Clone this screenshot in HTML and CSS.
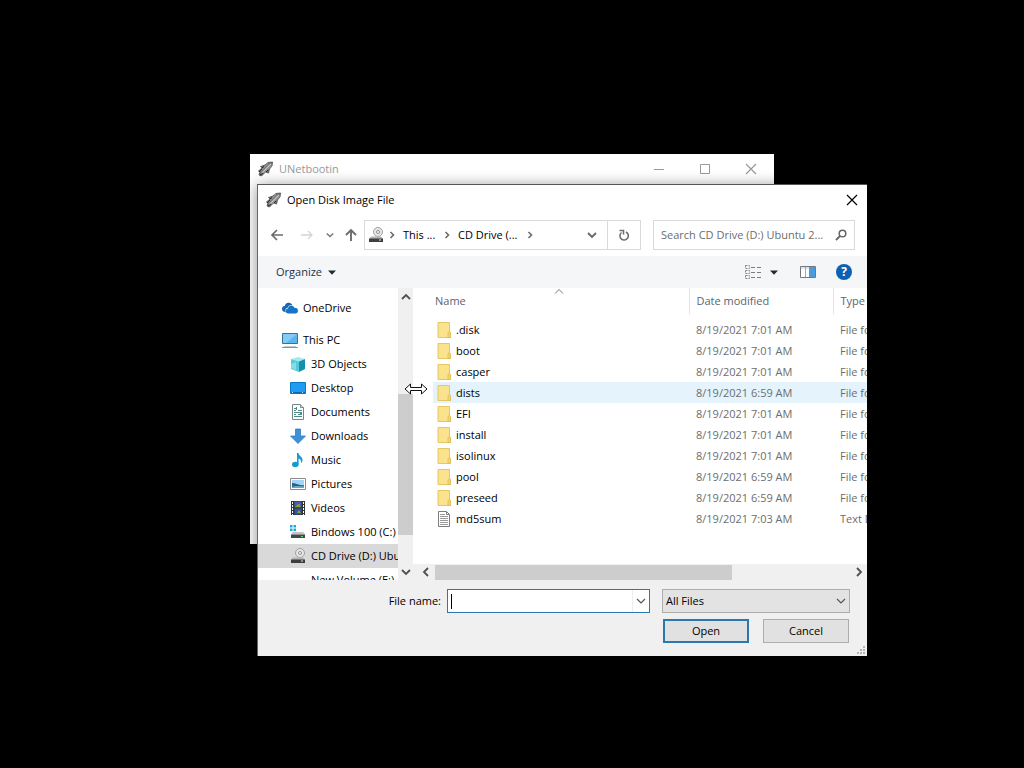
FILE: index.html
```html
<!DOCTYPE html>
<html lang="en">

<head>
    <meta charset="UTF-8">
    <title>Open Disk Image File</title>
    <link rel="stylesheet" href="styles.css">
</head>

<body>
    <!-- shared icons -->
    <svg class="sprite" aria-hidden="true">
        <symbol id="rocket" viewBox="0 0 16 16">
            <path d="M2.500 5.500L7 4l3-2.500 4.500-.5-.5 4-2.500 3-1 4L7.500 11l-4 4L1 14l1-3-1.500-1L4 7z" fill="#777" stroke="#4a4a4a" stroke-width=".8"/>
            <path d="M3.500 12.500L13 3" stroke="#c4c4c4" stroke-width="1.500"/>
            <path d="M6 12l7.500-7.500M3 9.500L10 2.500" stroke="#909090" stroke-width="1.200"/>
            <path d="M1 11l3-3M2 14l3-2M8 11l2-2M4 7l2-1.500" stroke="#2b2b2b"/>
        </symbol>
        <symbol id="folder" viewBox="0 0 14 16">
            <path d="M1 .5h11.500v9.500l1 1v4.500H1z" fill="#fbe38d" stroke="#e5c765"/>
            <path d="M11 15v-4.500l1.500-1 1 1V15.500H11z" fill="#f5d56c" stroke="#d9b957" stroke-width=".7"/>
        </symbol>
        <symbol id="cd-drive" viewBox="0 0 16 16">
            <circle cx="10" cy="5" r="4.500" fill="#e6e6e6" stroke="#a0a0a0"/>
            <circle cx="10" cy="5" r="1.500" fill="#fff" stroke="#8c8c8c"/>
            <path d="M3 9.500h10l2 2.500H1z" fill="#b4b4b4"/>
            <path d="M1 11.500h14V15H1z" fill="#3b3f42"/>
            <path d="M11 13h2" stroke="#e8e8e8"/>
        </symbol>
        <symbol id="chev-right" viewBox="0 0 8 8">
            <path d="M2.500 1l3 3-3 3" fill="none" stroke="#6a6a6a" stroke-width="1.600"/>
        </symbol>
        <symbol id="chev-down" viewBox="0 0 10 10">
            <path d="M1 3l4 4 4-4" fill="none" stroke="currentColor" stroke-width="1.800"/>
        </symbol>
        <symbol id="chev-thin" viewBox="0 0 10 10">
            <path d="M1 3l4 4 4-4" fill="none" stroke="currentColor" stroke-width="1.200"/>
        </symbol>
        <symbol id="triangle" viewBox="0 0 8 5">
            <path d="M0 .5h8L4 4.800z" fill="#1e2a36"/>
        </symbol>
        <symbol id="cross" viewBox="0 0 12 12">
            <path d="M1 1l10 10M11 1L1 11" stroke="currentColor" stroke-width="1.200"/>
        </symbol>
    </svg>

    <section class="window parent-window">
        <header class="title-bar inactive">
            <svg class="icon"><use href="#rocket"/></svg>
            <span class="title">UNetbootin</span>
            <button class="caption-btn" aria-label="Minimize"><svg viewBox="0 0 12 12"><path d="M1 6.500h10" stroke="currentColor"/></svg></button>
            <button class="caption-btn" aria-label="Maximize"><svg viewBox="0 0 12 12"><path d="M1.500 1.500h9v9h-9z" fill="none" stroke="currentColor"/></svg></button>
            <button class="caption-btn" aria-label="Close"><svg><use href="#cross"/></svg></button>
        </header>
    </section>

    <section class="window dialog">
        <header class="title-bar">
            <svg class="icon"><use href="#rocket"/></svg>
            <span class="title">Open Disk Image File</span>
            <button class="caption-btn dialog-close" aria-label="Close"><svg><use href="#cross"/></svg></button>
        </header>

        <nav class="nav-bar">
            <button class="nav-btn" aria-label="Back"><svg viewBox="0 0 14 14"><path d="M13 7H2M7 2L2 7l5 5" fill="none" stroke="#6c6c6c" stroke-width="1.700"/></svg></button>
            <button class="nav-btn" aria-label="Forward"><svg viewBox="0 0 14 14"><path d="M1 7h11M8 3l4 4-4 4" fill="none" stroke="#d4d4d4" stroke-width="1.300"/></svg></button>
            <button class="nav-btn recent" aria-label="Recent locations"><svg><use href="#chev-down"/></svg></button>
            <button class="nav-btn up" aria-label="Up"><svg viewBox="0 0 14 14"><path d="M7 13V2M2 7l5-5 5 5" fill="none" stroke="#6c6c6c" stroke-width="1.900"/></svg></button>
            <div class="address">
                <svg class="icon"><use href="#cd-drive"/></svg>
                <svg class="chev"><use href="#chev-right"/></svg>
                <button class="crumb crumb-pc">This ...</button>
                <svg class="chev"><use href="#chev-right"/></svg>
                <button class="crumb crumb-cd">CD Drive (...</button>
                <svg class="chev"><use href="#chev-right"/></svg>
                <button class="address-drop" aria-label="Previous locations"><svg><use href="#chev-down"/></svg></button>
                <button class="refresh" aria-label="Refresh"><svg viewBox="0 0 14 14"><path d="M4.500 4.500A4.200 4.200 0 1 0 9 4M2.500 2.500h4v4" fill="none" stroke="#707070" stroke-width="1.600"/></svg></button>
            </div>
            <div class="search">
                <input type="text" aria-label="Search" placeholder="Search CD Drive (D:) Ubuntu 2...">
                <svg viewBox="0 0 12 12"><circle cx="7.500" cy="4.500" r="3.300" fill="none" stroke="#666" stroke-width="1.500"/><path d="M5 7L1 11" stroke="#666" stroke-width="1.800"/></svg>
            </div>
        </nav>

        <div class="toolbar">
            <button class="organize">Organize <svg class="tri"><use href="#triangle"/></svg></button>
            <button class="view" aria-label="Change view">
                <svg class="icon" viewBox="0 0 16 16"><path d="M.5 1.500h4v3h-4zM.5 6.500h4v3h-4zM.5 11.500h4v3h-4z" fill="none" stroke="#8a8a8a" stroke-dasharray="2 1"/><path d="M6 3.500h4M12 3.500h4M6 8.500h4M12 8.500h4M6 13.500h4M12 13.500h4" stroke="#7c7c7c"/></svg>
                <svg class="tri"><use href="#triangle"/></svg>
            </button>
            <button class="preview" aria-label="Show the preview pane"><svg class="icon" viewBox="0 0 16 16"><path d="M.5 2.500h15v11H.5z" fill="#fff" stroke="#75777a"/><path d="M1 3h14v2H1z" fill="#dce6ef"/><path d="M5.500 3v10" stroke="#a5a7aa"/><path d="M9 3h6v10H9z" fill="#4b9be0"/></svg></button>
            <button class="help" aria-label="Help">?</button>
        </div>

        <div class="browser">
            <aside class="sidebar">
                <ul class="places">
                    <li class="root first"><svg class="icon" viewBox="0 0 16 16"><path d="M3.500 12C1 12 0 10.500 0 9c0-1.800 1-3 2.700-3C3.500 3.500 5 2.500 7 2.800c1.500 0 2.600 1 3.200 2.200-2-.5-4 .6-4.600 2.800C3.600 8 2.700 10 3.500 12z" fill="#1767b3"/><path d="M6.500 13.500c-2 0-3-1.200-3-2.500 0-1.500 1-2.500 2.500-2.600C6.300 6.500 7.500 5.500 9 5.500c1.600 0 2.700.9 3.200 2.300 2.200-.3 3.800 1 3.800 3 0 1.600-1 2.700-2.600 2.700z" fill="#1673c5"/></svg>OneDrive</li>
                    <li class="root"><svg class="icon" viewBox="0 0 16 16"><path d="M.5 1.500h15v10H.5z" fill="#5db4ee" stroke="#2d769f"/><path d="M1 2h14L4 11H1z" fill="#83cbf4"/><path d="M2 15h12M0 15.500h16" stroke="#7699aa"/></svg>This PC</li>
                    <li><svg class="icon" viewBox="0 0 16 16"><path d="M1 3l7-2 7 2-6 2.500z" fill="#a2eaf1"/><path d="M1 3l8 2.500V16l-8-3z" fill="#54cbd7"/><path d="M9 5.500L15 3v10l-6 3z" fill="#168faa"/><path d="M1 8l5-2v8l-5-2z" fill="#85dce4"/></svg>3D Objects</li>
                    <li><svg class="icon" viewBox="0 0 16 16"><path d="M.5 2.500h15v11H.5z" fill="#1c9cf3" stroke="#0878c6"/><path d="M1 12.500h14" stroke="#0869ae"/><path d="M2 12.500h1m9 0h1" stroke="#cbeaff"/></svg>Desktop</li>
                    <li><svg class="icon" viewBox="0 0 16 16"><path d="M2.500.5h8l3 3v12h-11z" fill="#fff" stroke="#7b8585"/><path d="M10.500.5v3h3" fill="#ddd" stroke="#7b8585"/><path d="M4 4.500h2M4 6.500h2m2 0h4M4 8.500h8M4 10.500h2m2 0h4M4 12.500h8" stroke="#508d85"/><path d="M6 3h1v3H6zM10 8h2v2h-2z" fill="#3a8c98"/></svg>Documents</li>
                    <li><svg class="icon" viewBox="0 0 16 16"><path d="M5.500 1h5v7h5L8 15.500.5 8h5z" fill="#3e91d8" stroke="#2675b8" stroke-width=".7"/></svg>Downloads</li>
                    <li><svg class="icon" viewBox="0 0 16 16"><ellipse cx="5.300" cy="12.500" rx="3.300" ry="2.700" fill="#159bce"/><path d="M7 1h1.500c0 3 4 3.500 4 7 0 1.500-.7 2.500-1.500 3 .3-3-1-4-2.400-4.400V12.500H7z" fill="#159bce"/></svg>Music</li>
                    <li><svg class="icon" viewBox="0 0 16 16"><path d="M.5 2.500h15v11H.5z" fill="#fff" stroke="#8b8b8b"/><path d="M2 4h12v8H2z" fill="#a2d6f4"/><path d="M2 7c4 0 7 3 12 2v3H2z" fill="#23658a"/><path d="M2 11c4-2 8 0 12-1v2H2z" fill="#66a8cb"/></svg>Pictures</li>
                    <li><svg class="icon" viewBox="0 0 16 16"><path d="M1 1h14v14H1z" fill="#303238"/><path d="M4.500 1.500h7v6h-7z" fill="#3d62b8"/><path d="M4.500 8.500h7v6h-7z" fill="#3454a0"/><path d="M5 7l3-3 3 3zM7 13l2-3 2 3z" fill="#80a63a"/><path d="M8 4h2v2H8z" fill="#cf7143"/><path d="M2.500 2v13M13.500 2v13" stroke="#fff" stroke-dasharray="2 1"/></svg>Videos</li>
                    <li><svg class="icon" viewBox="0 0 16 16"><path d="M0 1h2.500v2.500H0zM3.500 1H6v2.500H3.500zM0 4.500h2.500V7H0zM3.500 4.500H6V7H3.500z" fill="#17abd7"/><path d="M3 8h10l2 2.500H1z" fill="#c3c3c3"/><path d="M1 10.500h14V14H1z" fill="#43484b"/><path d="M11 12.500h2" stroke="#6adb65"/></svg>Bindows 100 (C:)</li>
                    <li class="selected"><svg class="icon"><use href="#cd-drive"/></svg>CD Drive (D:) Ubuntu</li>
                    <li><svg class="icon" viewBox="0 0 16 16"><path d="M3 8h10l2 2.500H1z" fill="#b5b5b5"/><path d="M1 10.500h14V14H1z" fill="#43484b"/></svg>New Volume (E:)</li>
                </ul>
                <div class="scroll-v">
                    <svg class="scroll-arrow flip"><use href="#chev-down"/></svg>
                    <div class="track"><div class="thumb"></div></div>
                    <svg class="scroll-arrow"><use href="#chev-down"/></svg>
                </div>
            </aside>

            <main class="files">
                <div class="table-wrap">
                    <svg class="sort" viewBox="0 0 10 5"><path d="M1 4.500l4-4 4 4" fill="none" stroke="#777"/></svg>
                    <table>
                        <thead>
                            <tr><th class="col-name">Name</th><th class="col-date">Date modified</th><th>Type</th></tr>
                        </thead>
                        <tbody>
                            <tr><td><svg><use href="#folder"/></svg>.disk</td><td>8/19/2021 7:01 AM</td><td>File folder</td></tr>
                            <tr><td><svg><use href="#folder"/></svg>boot</td><td>8/19/2021 7:01 AM</td><td>File folder</td></tr>
                            <tr><td><svg><use href="#folder"/></svg>casper</td><td>8/19/2021 7:01 AM</td><td>File folder</td></tr>
                            <tr class="hover"><td><svg><use href="#folder"/></svg>dists</td><td>8/19/2021 6:59 AM</td><td>File folder</td></tr>
                            <tr><td><svg><use href="#folder"/></svg>EFI</td><td>8/19/2021 7:01 AM</td><td>File folder</td></tr>
                            <tr><td><svg><use href="#folder"/></svg>install</td><td>8/19/2021 7:01 AM</td><td>File folder</td></tr>
                            <tr><td><svg><use href="#folder"/></svg>isolinux</td><td>8/19/2021 7:01 AM</td><td>File folder</td></tr>
                            <tr><td><svg><use href="#folder"/></svg>pool</td><td>8/19/2021 6:59 AM</td><td>File folder</td></tr>
                            <tr><td><svg><use href="#folder"/></svg>preseed</td><td>8/19/2021 6:59 AM</td><td>File folder</td></tr>
                            <tr><td><svg viewBox="0 0 14 16"><path d="M1.500.5h8l3 3v12h-11z" fill="#fff" stroke="#7d7d7d"/><path d="M9.500.5v3h3" fill="none" stroke="#7d7d7d"/><path d="M3 3.500h5M3 5.500h8M3 7.500h8M3 9.500h8M3 11.500h8M3 13.500h8" stroke="#9a9a9a"/></svg>md5sum</td><td>8/19/2021 7:03 AM</td><td>Text Document</td></tr>
                        </tbody>
                    </table>
                </div>
                <div class="scroll-h">
                    <svg class="scroll-arrow left"><use href="#chev-down"/></svg>
                    <div class="track"><div class="thumb"></div></div>
                    <svg class="scroll-arrow right"><use href="#chev-down"/></svg>
                </div>
            </main>
        </div>

        <footer class="footer">
            <div class="footer-row">
                <label for="fileName">File name:</label>
                <div class="combo">
                    <span class="caret"></span>
                    <input type="text" id="fileName">
                    <button aria-label="File name history"><svg><use href="#chev-thin"/></svg></button>
                </div>
                <div class="filter">
                    <select aria-label="File type">
                        <option>All Files</option>
                    </select>
                    <svg><use href="#chev-thin"/></svg>
                </div>
            </div>
            <div class="footer-row actions">
                <button class="btn primary">Open</button>
                <button class="btn">Cancel</button>
            </div>
            <svg class="grip" viewBox="0 0 10 10"><path d="M7 1h2M4 4h2M7 4h2M1 7h2M4 7h2M7 7h2" stroke="#b5b5b5" stroke-width="2"/></svg>
        </footer>
    </section>

    <!-- mouse pointer over the splitter -->
    <svg class="pointer" viewBox="0 0 24 12"><path d="M1 6l5.500-5v3.500h11V1L23 6l-5.500 5V7.500h-11V11z" fill="#fff" stroke="#111"/></svg>
</body>
</html>
```

FILE: styles.css
```css
* {
    box-sizing: border-box;
}

body {
    margin: 0;
    height: 100vh;
    position: relative;
    overflow: hidden;
    background: #000;
    color: #000;
    font-family: "Open Sans", "Noto Sans", sans-serif;
    font-size: 11px;
    line-height: 16px;
}

button,
input,
select {
    margin: 0;
    padding: 0;
    border: none;
    background: none;
    color: inherit;
    font: inherit;
    outline: none;
}

svg {
    display: block;
    flex: none;
}

.sprite {
    position: absolute;
    width: 0;
    height: 0;
}

.icon {
    width: 16px;
    height: 16px;
}

/* windows */
.window {
    position: absolute;
    background: #fff;
}

.parent-window {
    top: 154px;
    right: 250px;
    bottom: 224px;
    left: 250px;
    overflow: hidden;
}

.dialog {
    top: 184px;
    right: 157px;
    bottom: 112px;
    left: 257px;
    display: flex;
    flex-direction: column;
    border-top: 1px solid #555;
    border-left: 1px solid #666;
    box-shadow: 0 2px 14px rgba(0, 0, 0, 0.45);
}

.title-bar {
    display: flex;
    align-items: center;
    height: 30px;
    flex: none;
    padding-left: 8px;
}

.title-bar .title {
    flex: 1;
    margin-left: 5px;
}

.inactive {
    color: #999;
}

.caption-btn {
    display: flex;
    align-items: center;
    justify-content: center;
    width: 46px;
    height: 30px;
}

.caption-btn svg {
    width: 12px;
    height: 12px;
}

.dialog-close {
    width: 30px;
    color: #000;
}

/* navigation */
.nav-bar {
    display: flex;
    align-items: center;
    flex: none;
    height: 41px;
    padding: 0 12px 2px 4px;
}

.nav-btn {
    display: flex;
    align-items: center;
    justify-content: center;
    width: 30px;
    height: 24px;
    color: #777;
}

.nav-btn svg {
    width: 14px;
    height: 14px;
}

.recent {
    width: 16px;
}

.recent svg {
    width: 8px;
    height: 8px;
}

.up {
    width: 26px;
}

.address {
    display: flex;
    align-items: center;
    flex: 1;
    height: 30px;
    padding-left: 3px;
    border: 1px solid #d9d9d9;
}

.chev {
    width: 8px;
    height: 8px;
    margin: 0 4px;
}

.crumb {
    margin-left: 3px;
    white-space: nowrap;
    text-align: left;
}

.crumb-pc {
    width: 36px;
}

.crumb-cd {
    width: 64px;
}

.address-drop {
    display: flex;
    justify-content: center;
    width: 30px;
    margin-left: auto;
    color: #666;
}

.address-drop svg {
    width: 10px;
    height: 10px;
}

.refresh {
    display: flex;
    align-items: center;
    justify-content: center;
    width: 33px;
    height: 28px;
    border-left: 1px solid #d9d9d9;
}

.refresh svg {
    width: 14px;
    height: 14px;
}

.search {
    display: flex;
    align-items: center;
    width: 202px;
    height: 30px;
    margin-left: 12px;
    padding: 0 7px;
    border: 1px solid #d9d9d9;
}

.search input {
    flex: 1;
    min-width: 0;
}

.search input::placeholder {
    color: #6d6d6d;
    opacity: 1;
}

.search svg {
    width: 12px;
    height: 12px;
}

/* toolbar */
.toolbar {
    display: flex;
    align-items: center;
    flex: none;
    height: 32px;
    padding: 0 15px 0 18px;
    background: #f5f6f8;
    color: #1e3247;
}

.toolbar button {
    display: flex;
    align-items: center;
}

.tri {
    width: 8px;
    height: 5px;
}

.organize {
    gap: 6px;
    margin-right: auto;
}

.view {
    gap: 9px;
}

.preview {
    margin: 0 20px 0 22px;
}

.toolbar .help {
    justify-content: center;
    width: 16px;
    height: 16px;
    border-radius: 50%;
    background: #0c61b4;
    color: #fff;
    font-size: 12px;
    font-weight: bold;
}

/* folder tree and file list */
.browser {
    display: flex;
    flex: 1;
    min-height: 0;
}

.sidebar {
    display: flex;
    width: 155px;
    flex: none;
}

.places {
    flex: 1;
    min-width: 0;
    margin: 0;
    padding: 8px 0 0;
    overflow: hidden;
    list-style: none;
}

.places li {
    display: flex;
    align-items: center;
    gap: 5px;
    height: 24px;
    padding-left: 32px;
    white-space: nowrap;
    overflow: hidden;
}

.places .root {
    padding-left: 24px;
}

.places .first {
    margin-bottom: 8px;
}

.places .selected {
    background: #d9d9d9;
}

.scroll-v {
    display: flex;
    flex-direction: column;
    align-items: center;
    width: 15px;
    padding: 4px 0 3px;
    background: #f0f0f0;
}

.scroll-v .track {
    display: flex;
    flex-direction: column;
    flex: 1;
    width: 100%;
    padding: 92px 0 32px;
}

.scroll-v .thumb {
    flex: 1;
}

.thumb {
    background: #cdcdcd;
}

.scroll-arrow {
    width: 10px;
    height: 10px;
    color: #505050;
}

.flip {
    transform: rotate(180deg);
}

.left {
    transform: rotate(90deg);
}

.right {
    transform: rotate(-90deg);
}

.files {
    display: flex;
    flex-direction: column;
    flex: 1;
    min-width: 0;
}

.table-wrap {
    position: relative;
    flex: 1;
    padding-left: 20px;
    overflow: hidden;
}

.sort {
    position: absolute;
    top: 1px;
    left: 141px;
    width: 10px;
    height: 5px;
}

table {
    width: 100%;
    table-layout: fixed;
    border-collapse: collapse;
}

th,
td {
    height: 21px;
    padding: 0 0 0 7px;
    overflow: hidden;
    text-align: left;
    font-weight: normal;
    white-space: nowrap;
    color: #6d6d6d;
}

th {
    height: 26px;
    border-left: 1px solid #e5e5e5;
    color: #5a6470;
}

.col-name {
    width: 256px;
    padding-left: 2px;
    border-left: none;
}

.col-date {
    width: 144px;
}

tbody::before {
    content: "";
    display: block;
    height: 5px;
}

td:first-child {
    padding-left: 4px;
    color: #000;
}

td svg {
    display: inline-block;
    width: 14px;
    height: 16px;
    margin-right: 5px;
    vertical-align: -4px;
}

.hover {
    background: #e5f3fc;
}

.scroll-h {
    display: flex;
    align-items: center;
    height: 16px;
    padding: 0 3px 0 8px;
    background: #f0f0f0;
}

.scroll-h .track {
    flex: 1;
    height: 15px;
    margin-left: 4px;
}

.scroll-h .thumb {
    width: 71%;
    height: 100%;
}

/* footer */
.footer {
    position: relative;
    flex: none;
    height: 76px;
    padding: 9px 17px 0 20px;
    background: #f0f0f0;
}

.footer-row {
    display: flex;
    align-items: center;
    justify-content: flex-end;
    height: 24px;
}

.combo {
    position: relative;
    display: flex;
    width: 203px;
    height: 24px;
    margin: 0 12px 0 6px;
    border: 1px solid #2a79ac;
    background: #fff;
}

.combo input {
    flex: 1;
    min-width: 0;
    padding-left: 4px;
}

.combo button {
    display: flex;
    align-items: center;
    justify-content: center;
    width: 17px;
    border-left: 1px solid #e8eef2;
    color: #555;
}

.combo svg,
.filter svg {
    width: 10px;
    height: 10px;
}

.caret {
    position: absolute;
    top: 4px;
    left: 3px;
    width: 1px;
    height: 15px;
    background: #000;
}

.filter {
    position: relative;
    width: 188px;
    height: 24px;
    color: #555;
}

.filter select {
    width: 100%;
    height: 100%;
    padding-left: 3px;
    border: 1px solid #adadad;
    background: #e3e3e3;
    color: #000;
    appearance: none;
}

.filter svg {
    position: absolute;
    top: 7px;
    right: 4px;
    pointer-events: none;
}

.actions {
    gap: 14px;
    margin-top: 6px;
    padding-right: 1px;
}

.btn {
    width: 86px;
    height: 24px;
    border: 1px solid #adadad;
    background: #e1e1e1;
}

.primary {
    border: 2px solid #2a79ac;
}

.grip {
    position: absolute;
    right: 1px;
    bottom: 0;
    width: 10px;
    height: 10px;
}

.pointer {
    position: absolute;
    top: 383px;
    left: 404px;
    width: 24px;
    height: 12px;
}
```
